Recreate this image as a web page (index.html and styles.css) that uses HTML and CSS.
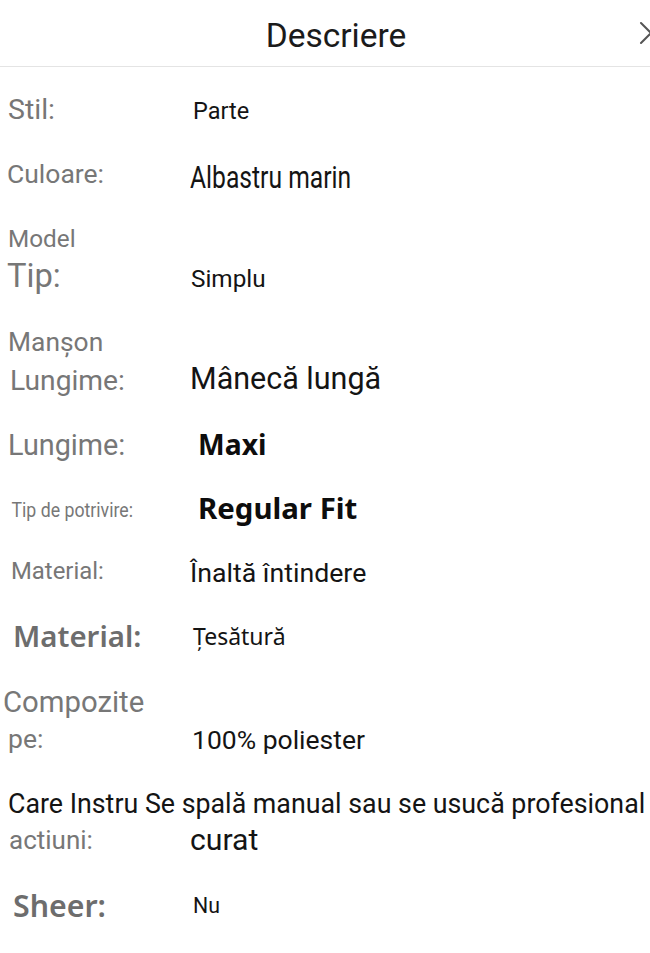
FILE: index.html
```html
<!DOCTYPE html>
<html lang="ro">
<head>
<meta charset="utf-8">
<title>Descriere</title>
<link rel="stylesheet" href="styles.css">
</head>
<body>
<div class="sheet">
  <header class="top">
    <h1 class="title">Descriere</h1>
    <svg class="close" width="24" height="24" viewBox="0 0 24 24" aria-label="Închide"><path d="M2 2 L22 22 M22 2 L2 22" stroke="#555" stroke-width="2" fill="none" stroke-linecap="round"/></svg>
  </header>
  <div class="list">
    <div class="row r-stil"><span class="lab l-stil">Stil:</span><span class="val v-parte">Parte</span></div>
    <div class="row r-culoare"><span class="lab l-culoare">Culoare:</span><span class="val v-albastru">Albastru marin</span></div>
    <div class="row r-model"><span class="lab l-model">Model</span></div>
    <div class="row r-tip"><span class="lab l-tip">Tip:</span><span class="val v-simplu">Simplu</span></div>
    <div class="row r-manson"><span class="lab l-manson">Manșon</span></div>
    <div class="row r-lung1"><span class="lab l-lung1">Lungime:</span><span class="val v-maneca">Mânecă lungă</span></div>
    <div class="row r-lung2"><span class="lab l-lung2">Lungime:</span><span class="val v-maxi">Maxi</span></div>
    <div class="row r-potr"><span class="lab l-potr">Tip de potrivire:</span><span class="val v-regular">Regular Fit</span></div>
    <div class="row r-mat1"><span class="lab l-mat1">Material:</span><span class="val v-inalta">Înaltă întindere</span></div>
    <div class="row r-mat2"><span class="lab l-mat2">Material:</span><span class="val v-tesatura">Țesătură</span></div>
    <div class="row r-comp"><span class="lab l-comp">Compozite</span></div>
    <div class="row r-pe"><span class="lab l-pe">pe:</span><span class="val v-poli">100% poliester</span></div>
    <div class="row r-care"><span class="val v-care">Care Instru Se spală manual sau se usucă profesional</span></div>
    <div class="row r-act"><span class="lab l-act">actiuni:</span><span class="val v-curat">curat</span></div>
    <div class="row r-sheer"><span class="lab l-sheer">Sheer:</span><span class="val v-nu">Nu</span></div>
  </div>
</div>
</body>
</html>
```
FILE: styles.css
```css
* { box-sizing: border-box; margin: 0; padding: 0; }
html { overflow: hidden; background: #fff; }
body { width: 650px; height: 953px; overflow: hidden; background: #fff; font-family: Roboto, "Noto Sans", "Liberation Sans", sans-serif; color: #111; }
.sheet { width: 650px; }

.top { height: 67px; border-bottom: 1px solid #e4e4e4; display: flex; justify-content: center; position: relative; }
.title { font-weight: 400; font-size: 33.5px; line-height: 1; margin-top: 19px; margin-left: 22px; color: #1b1b1b; }
.close { position: absolute; right: -13px; top: 21px; }

.list { display: flex; flex-direction: column; }
.row { display: flex; align-items: flex-start; line-height: 1; flex: 0 0 auto; }
.lab { color: #777; flex: 0 0 auto; white-space: nowrap; }
.val { color: #141414; white-space: nowrap; }
.noto { font-family: "Noto Sans", sans-serif; }

/* Stil */
.r-stil { height: 90px; }
.l-stil { font-size: 28.5px; margin-top: 29px; padding-left: 8px; width: 193px; }
.v-parte { font-size: 23.5px; margin-top: 33px; }

/* Culoare */
.r-culoare { height: 63px; }
.l-culoare { font-size: 26.5px; margin-top: 3.5px; padding-left: 7px; width: 190px; }
.v-albastru { display: inline-block; font-size: 31px; margin-top: 5px; transform: scaleX(0.795); transform-origin: left center; }

/* Model / Tip */
.r-model { height: 40px; }
.l-model { font-size: 24.3px; margin-top: 6.5px; padding-left: 8px; }
.r-tip { height: 62px; }
.l-tip { font-size: 32.7px; margin-top: 0; padding-left: 7px; width: 191px; }
.v-simplu { font-size: 24.3px; margin-top: 7px; }

/* Manson / Lungime */
.r-manson { height: 40px; }
.l-manson { font-size: 26.4px; margin-top: 7px; padding-left: 8px; }
.r-lung1 { height: 63px; }
.l-lung1 { font-size: 28.2px; margin-top: 5.3px; padding-left: 10px; width: 190px; }
.v-maneca { font-size: 30.5px; margin-top: 2.3px; }

.r-lung2 { height: 64px; }
.l-lung2 { font-size: 28.8px; margin-top: 5.8px; padding-left: 8px; width: 198px; }
.v-maxi { font-size: 28.3px; margin-top: 4.9px; font-weight: 700; font-family: "Noto Sans", sans-serif; color: #0d0d0d; }

.r-potr { height: 64px; }
.l-potr { display: inline-block; font-size: 20px; margin-top: 11.2px; padding-left: 13px; width: 221px; transform: scaleX(0.885); transform-origin: left center; margin-right: -23px; }
.v-regular { font-size: 29.4px; margin-top: 4.9px; font-weight: 700; font-family: "Noto Sans", sans-serif; color: #0d0d0d; }

.r-mat1 { height: 64px; }
.l-mat1 { font-size: 23.9px; margin-top: 6.9px; padding-left: 11px; width: 190px; }
.v-inalta { font-size: 26.7px; margin-top: 6.5px; }

.r-mat2 { height: 66px; }
.l-mat2 { font-size: 29.4px; margin-top: 4.9px; padding-left: 13px; width: 193px; font-weight: 600; font-family: "Noto Sans", sans-serif; color: #6d6d6d; }
.v-tesatura { font-size: 23px; margin-top: 7.6px; font-family: "Noto Sans", sans-serif; }

.r-comp { height: 40px; }
.l-comp { font-size: 29.3px; margin-top: 5.3px; padding-left: 3px; }
.r-pe { height: 64px; }
.l-pe { font-size: 26.5px; margin-top: 2.7px; padding-left: 8px; width: 192px; }
.v-poli { font-size: 26.5px; margin-top: 3.7px; }

.r-care { height: 33px; }
.v-care { font-size: 26.8px; margin-top: 4.4px; padding-left: 8px; }
.r-act { height: 65px; }
.l-act { font-size: 26px; margin-top: 7.1px; padding-left: 9px; width: 190px; }
.v-curat { font-size: 30.2px; margin-top: 4.6px; }

.r-sheer { height: 68px; }
.l-sheer { font-size: 30.3px; margin-top: 6.1px; padding-left: 13px; width: 193px; font-weight: 600; font-family: "Noto Sans", sans-serif; color: #6d6d6d; }
.v-nu { font-size: 21.3px; margin-top: 10.1px; }
```
